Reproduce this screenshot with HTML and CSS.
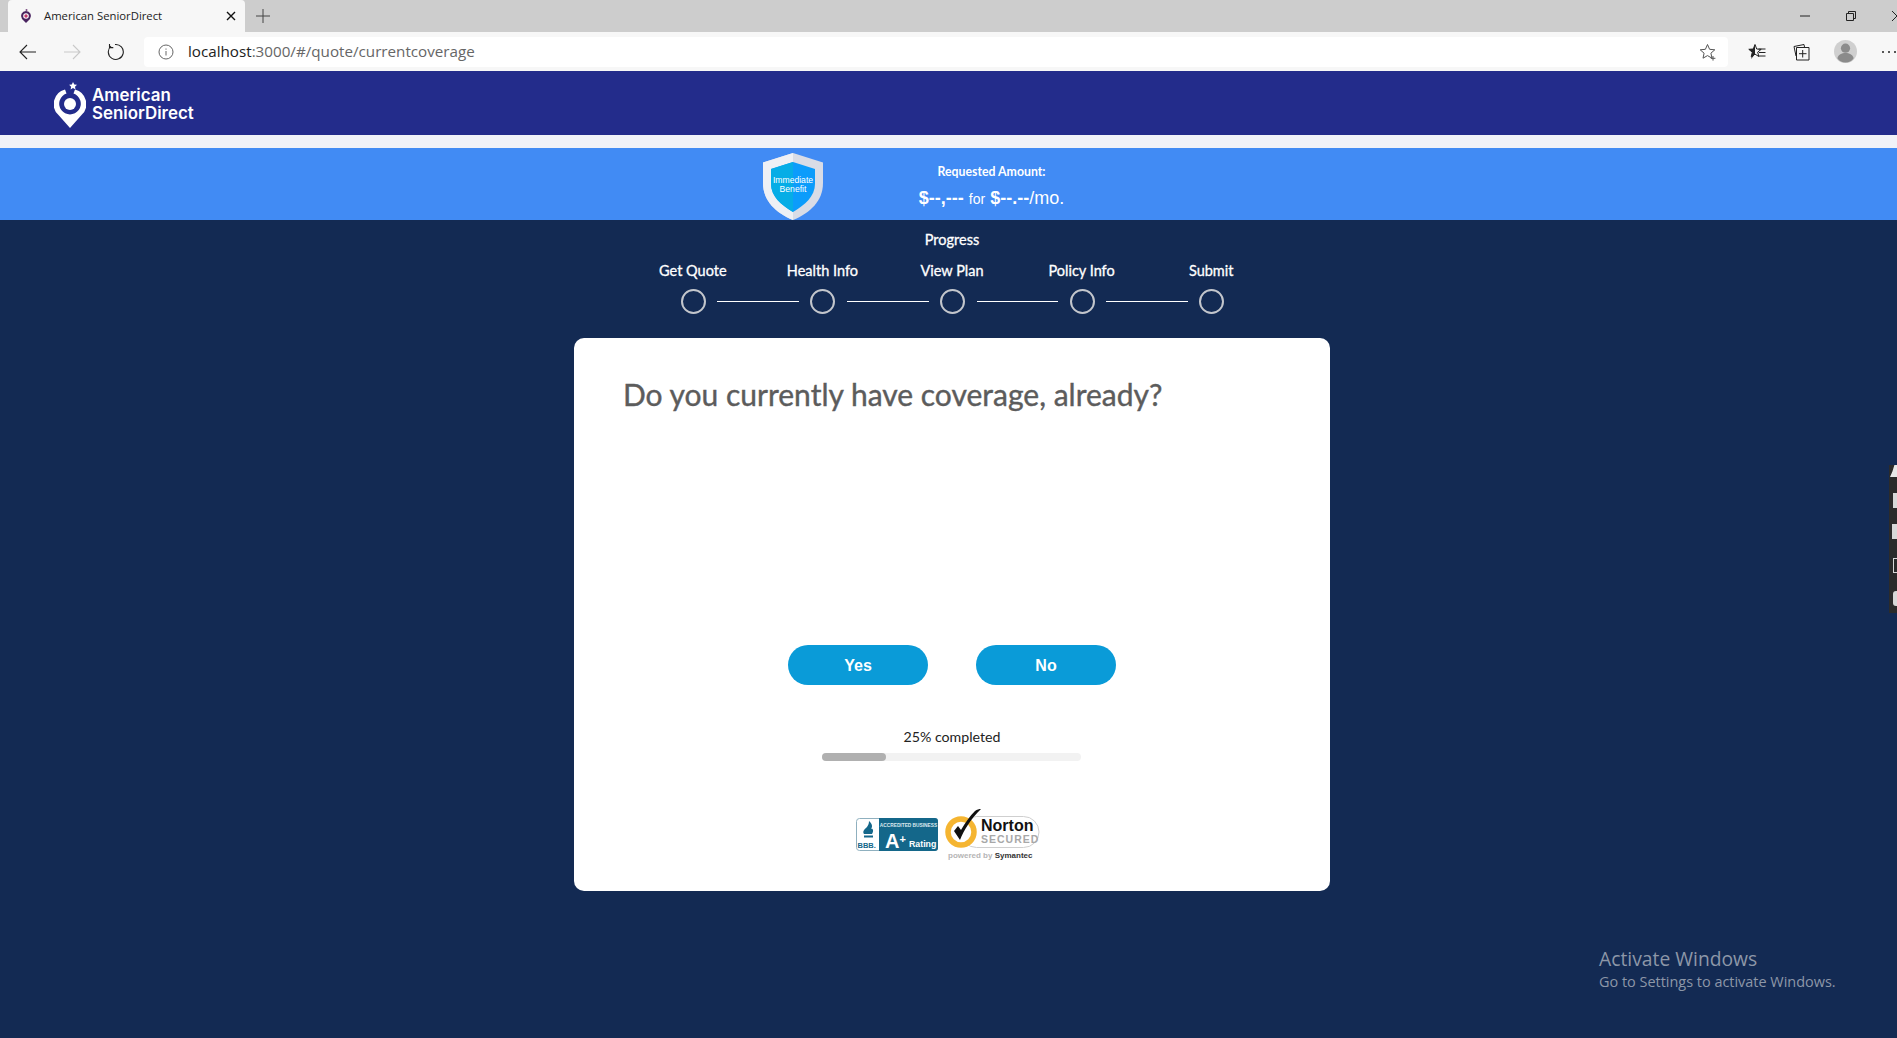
FILE: index.html
```html
<!DOCTYPE html>
<html lang="en">
<head>
  <meta charset="UTF-8">
  <title>American SeniorDirect</title>
  <link rel="stylesheet" href="styles.css">
</head>
<body>
  <div class="tabstrip">
    <div class="tab">
      <svg class="tab-icon" viewBox="0 0 12 14" width="12" height="14"><path d="M6 2a5 5 0 0 0-4 8l4 4 4-4A5 5 0 0 0 6 2z" fill="#4a2460"/><circle cx="6" cy="7" r="2.800" fill="#fff"/><circle cx="6" cy="7" r="1.700" fill="#c0396b"/><circle cx="6.500" cy="1" r="1" fill="#7a4a80"/></svg>
      <span class="tab-title">American SeniorDirect</span>
      <svg class="tab-close" viewBox="0 0 10 10" width="10" height="10"><path d="M1 1l8 8M9 1l-8 8" stroke="#111" stroke-width="1.400"/></svg>
    </div>
    <svg class="tab-new" viewBox="0 0 14 14" width="14" height="14"><path d="M7 0v14M0 7h14" stroke="#444" stroke-width="1"/></svg>
    <div class="win-controls">
      <svg viewBox="0 0 10 10" width="10" height="10"><path d="M0 5h10" stroke="#222"/></svg>
      <svg viewBox="0 0 10 10" width="10" height="10"><path d="M.5 2.500h7v7h-7zM2.500 2.500v-2h7v7h-2" fill="none" stroke="#222"/></svg>
      <svg viewBox="0 0 10 10" width="10" height="10"><path d="M0 0l10 10M10 0L0 10" stroke="#222"/></svg>
    </div>
  </div>

  <div class="toolbar">
    <div class="tool-btn"><svg viewBox="0 0 18 16" width="18" height="16"><path d="M17 8H1M8 1L1 8l7 7" fill="none" stroke="#222" stroke-width="1.100"/></svg></div>
    <div class="tool-btn"><svg viewBox="0 0 18 16" width="18" height="16"><path d="M1 8h16M10 1l7 7-7 7" fill="none" stroke="#c9c9c9" stroke-width="1.100"/></svg></div>
    <div class="tool-btn tool-reload"><svg viewBox="0 0 18 18" width="18" height="18"><path d="M5 3.200A7.500 7.500 0 1 0 9 1.500M3.500 1v3.600h3.800" fill="none" stroke="#222" stroke-width="1.100"/></svg></div>
    <div class="address">
      <svg class="info" viewBox="0 0 16 16" width="16" height="16"><circle cx="8" cy="8" r="7" fill="none" stroke="#666"/><path d="M8 7v4.500M8 4.500v1.200" stroke="#666"/></svg>
      <span class="url"><span class="url-host">localhost</span>:3000/#/quote/currentcoverage</span>
      <svg class="fav-add" viewBox="0 0 18 18" width="18" height="18"><path d="M8.500 1.500l2.100 4.800 5.200.5-3.900 3.400 1.100 5-4.500-2.600L4 15.200l1.100-5L1.200 6.800l5.200-.5z" fill="none" stroke="#555"/><path d="M14 13v4.600M11.800 15.300h4.600" stroke="#555"/></svg>
    </div>
    <div class="tool-btn"><svg viewBox="0 0 18 18" width="18" height="18"><path d="M7 1.500l1.700 4.500 4.500.3-3.500 2.800 1.100 4.400L7 11.100l-3.800 2.500 1.100-4.400L.8 6.300l4.500-.3z" fill="none" stroke="#222"/><path d="M7 1.500v9.600l-3.800 5 1.100-6.900L.8 6.300l4.500-.3z" fill="#222"/><path d="M10.500 6h7M11 9.500h6.500M10.500 13h7" stroke="#222"/></svg></div>
    <div class="tool-btn"><svg viewBox="0 0 18 18" width="18" height="18"><path d="M4 13L2 3.500 12 1.500l.6 3" fill="none" stroke="#222"/><path d="M4.500 4.500h12.500v12.500H4.500zM10.700 7v7.500M7 10.700h7.500" fill="none" stroke="#222"/></svg></div>
    <div class="tool-btn"><svg viewBox="0 0 24 24" width="23" height="23"><circle cx="12" cy="12" r="12" fill="#cfcfcf"/><circle cx="12" cy="8.500" r="4.800" fill="#8b8b8b"/><path d="M3.500 19c1-4 4.500-5.500 8.500-5.500s7.500 1.500 8.500 5.500c-2 3-5 4.500-8.500 4.500s-6.500-1.500-8.500-4.500z" fill="#8b8b8b"/></svg></div>
    <div class="tool-btn"><svg viewBox="0 0 16 4" width="16" height="4"><circle cx="2" cy="2" r="1" fill="#222"/><circle cx="8" cy="2" r="1" fill="#222"/><circle cx="14" cy="2" r="1" fill="#222"/></svg></div>
  </div>

  <header class="site-header">
    <svg class="logo-mark" viewBox="0 0 32 46" width="32" height="46">
      <path d="M19 0l1.300 2.500 2.700.3-2 1.900.5 2.700-2.500-1.300-2.400 1.300.5-2.700-2-1.900 2.700-.3z" fill="#fff"/>
      <path d="M11 7.500A15 15 0 0 0 4.500 33L16 46l11.500-13A15 15 0 0 0 21 7.500l-1.500 4a10.800 10.800 0 1 1-7 0z" fill="#fff"/>
      <circle cx="16" cy="22" r="6" fill="#fff"/>
    </svg>
    <div class="logo-text">American<br>SeniorDirect</div>
  </header>

  <div class="header-gap"></div>

  <div class="quote-bar">
    <svg class="shield" viewBox="0 0 60 67" width="60" height="67">
      <path d="M30 0L60 9.500V30c0 18-13 30-30 37C13 60 0 48 0 30V9.500z" fill="#d9dce6"/>
      <path d="M30 0v67C13 60 0 48 0 30V9.500z" fill="#eef0f5"/>
      <path d="M30 9l22 7v15c0 12-10 21-22 28C18 52 8 43 8 31V16z" fill="#0c9cfb"/>
      <path d="M30 9v50C18 52 8 43 8 31V16z" fill="#06ade6"/>
      <text class="shield-text" x="30" y="30">Immediate</text>
      <text class="shield-text" x="30" y="39">Benefit</text>
    </svg>
    <div class="quote-summary">
      <div class="quote-label">Requested Amount:</div>
      <div class="quote-amount"><b>$--,---</b> <small>for</small> <b>$--.--</b>/mo.</div>
    </div>
  </div>

  <main class="main">
    <div class="progress-title">Progress</div>
    <div class="step-labels">
      <span>Get Quote</span>
      <span>Health Info</span>
      <span>View Plan</span>
      <span>Policy Info</span>
      <span>Submit</span>
    </div>
    <div class="step-track">
      <i class="dot"></i><i class="line"></i>
      <i class="dot"></i><i class="line"></i>
      <i class="dot"></i><i class="line"></i>
      <i class="dot"></i><i class="line"></i>
      <i class="dot"></i>
    </div>

    <section class="card">
      <h1>Do you currently have coverage, already?</h1>
      <div class="answers">
        <button type="button">Yes</button>
        <button type="button">No</button>
      </div>
      <div class="completed">25% completed</div>
      <div class="bar"><div class="bar-fill" style="width: 25%"></div></div>
      <div class="badges">
        <svg viewBox="0 0 82 33" width="82" height="33">
          <rect x=".5" y=".5" width="81" height="32" rx="3" fill="#fff" stroke="#8fb0bf"/>
          <path d="M23 0h56a3 3 0 0 1 3 3v27a3 3 0 0 1-3 3H23z" fill="#14678a"/>
          <path d="M13 3c3 3 4 5 2 8 2-1 3 2 1 5H8c-2-3 1-5 3-7 1-2 2-3 2-6z" fill="#14678a"/>
          <rect x="8" y="17.500" width="9" height="2" fill="#14678a"/>
          <text class="bbb-mark" x="1.500" y="30">BBB.</text>
          <text class="bbb-top" x="52.500" y="9">ACCREDITED BUSINESS</text>
          <text class="bbb-grade" x="29" y="30">A<tspan class="bbb-plus" dy="-5">+</tspan></text>
          <text class="bbb-rating" x="53" y="29">Rating</text>
        </svg>
        <svg viewBox="0 0 96 52" width="96" height="52">
          <rect x="17" y="8.500" width="78" height="31" rx="15.500" fill="#fff" stroke="#cfcfcf"/>
          <circle cx="17" cy="24" r="13" fill="#fff" stroke="#f5b531" stroke-width="5.500"/>
          <path d="M10 23l6 9C20 22 26 12 37 1c-2 0-4 .5-6 2-5 5-10 12-14 19l-3-4z" fill="#111"/>
          <text class="norton-name" x="37" y="23">Norton</text>
          <text class="norton-secured" x="37" y="35">SECURED</text>
          <text class="norton-by" x="4" y="50">powered by <tspan class="norton-sym">Symantec</tspan></text>
        </svg>
      </div>
    </section>
  </main>

  <div class="activate">
    <div class="activate-title">Activate Windows</div>
    <div>Go to Settings to activate Windows.</div>
  </div>

  <div class="side-widget">
    <i class="side-star"></i>
    <i class="side-box"></i>
    <i class="side-box side-wide"></i>
    <i class="side-box side-outline"></i>
    <i class="side-box side-gear"></i>
  </div>
</body>
</html>
```

FILE: styles.css
```css
* { box-sizing: border-box; }
html, body { height: 100%; }
body { margin: 0; display: flex; flex-direction: column; overflow: hidden; font-family: Lato, "Liberation Sans", sans-serif; background: #132a53; }

.tabstrip { height: 32px; flex: none; display: flex; align-items: center; background: #cdcdcd; padding-left: 8px; }
.tab { width: 237px; height: 32px; display: flex; align-items: center; background: #f7f7f7; border-radius: 4px 4px 0 0; padding: 0 9px 0 12px; }
.tab-title { flex: 1; margin-left: 12px; padding-bottom: 1px; font: 11.300px "Open Sans", sans-serif; color: #222; }
.tab-new { margin-left: 11px; }
.win-controls { margin-left: auto; display: flex; gap: 36px; margin-right: -5px; flex: none; }
.win-controls svg { flex: none; }

.toolbar { height: 39px; flex: none; display: flex; align-items: center; background: #f7f7f7; padding-left: 6px; overflow: hidden; }
.tool-btn { width: 44px; flex: none; display: flex; justify-content: center; align-items: center; }
.tool-reload { padding-right: 2px; }
.address { width: 1584px; height: 30px; flex: none; margin: 0 7px 0 6px; background: #fff; border-radius: 4px; display: flex; align-items: center; padding: 0 11px 0 14px; }
.url { flex: 1; margin-left: 14px; padding-bottom: 2px; font: 15.200px "Open Sans", sans-serif; color: #666; }
.url-host { color: #222; }

.site-header { height: 64px; flex: none; display: flex; align-items: center; gap: 6px; background: #232c8b; padding-left: 54px; }
.logo-mark { margin-top: 4px; }
.logo-text { font: 600 16.900px/17.500px Inter, sans-serif; color: #fff; margin-top: 3px; }
.header-gap { height: 13px; flex: none; background: #f0f2f8; }

.quote-bar { height: 72px; flex: none; display: flex; background: #418bf4; padding-left: 763px; }
.shield { margin-top: 5px; }
.shield-text { font: 8.600px "Liberation Sans", sans-serif; fill: #fff; text-anchor: middle; }
.quote-summary { width: 200px; margin-left: 69px; text-align: center; color: #fff; padding-top: 14px; }
.quote-label { font-size: 12.300px; line-height: 20px; font-weight: 700; margin-left: -1px; }
.quote-amount { font: 18px/26px "Liberation Sans", sans-serif; margin-top: 3px; margin-left: -1px; }
.quote-amount small { font-size: 14px; }

.main { flex: 1; display: flex; flex-direction: column; align-items: center; padding: 10px 0 0 7px; background: #132a53; color: #fff; }
.progress-title { font-size: 14.500px; line-height: 20px; -webkit-text-stroke: .3px #fff; }
.step-labels { display: grid; grid-template-columns: repeat(5, 129.6px); margin-top: 10.500px; font-size: 14.500px; line-height: 20px; -webkit-text-stroke: .3px #fff; text-align: center; }
.step-track { display: flex; align-items: center; margin-top: 8.500px; height: 25px; margin-left: 1px; }
.dot { width: 25px; height: 25px; flex: none; border: 2px solid #c3c6cc; border-radius: 50%; }
.line { width: 81.600px; height: 1px; margin: 0 11.500px; background: #fff; }

.card { width: 756px; height: 553px; margin-top: 24px; display: flex; flex-direction: column; align-items: center; background: #fff; border-radius: 10px; color: #222; }
.card h1 { align-self: flex-start; margin: 35px 0 0 49px; font-size: 30px; line-height: 42px; font-weight: 400; color: #5c5c5c; -webkit-text-stroke: .4px #5c5c5c; }
.answers { display: flex; gap: 48px; margin-top: 230px; }
.answers button { width: 140px; height: 40px; padding-top: 2px; border: none; border-radius: 20px; background: #0a9bd8; color: #fff; font: 700 16px "Liberation Sans", sans-serif; cursor: pointer; }
.completed { margin-top: 42px; font-size: 14.200px; line-height: 20px; color: #222; }
.bar { width: 259px; height: 8px; margin: 6px 2px 0 0; border-radius: 4px; background: #f2f2f2; }
.bar-fill { height: 8px; border-radius: 4px; background: #b0b0b0; }
.badges { display: flex; align-items: flex-start; gap: 6px; margin-top: 47px; margin-right: 8px; }
.badges svg:first-child { margin-top: 10px; }

.bbb-mark { font: 700 7.500px "Liberation Sans", sans-serif; fill: #14678a; }
.bbb-top { font: 700 4.800px "Liberation Sans", sans-serif; fill: #dce9ee; text-anchor: middle; }
.bbb-grade { font: 700 20px "Liberation Sans", sans-serif; fill: #fff; }
.bbb-plus { font-size: 11px; }
.bbb-rating { font: 700 8.800px "Liberation Sans", sans-serif; fill: #fff; }
.norton-name { font: 700 16px "Liberation Sans", sans-serif; fill: #111; }
.norton-secured { font: 700 10.500px "Liberation Sans", sans-serif; fill: #a8a8a8; letter-spacing: 1px; }
.norton-by { font: 700 8px "Liberation Sans", sans-serif; fill: #b5b5b5; }
.norton-sym { fill: #333; }

.activate { position: absolute; left: 1599px; top: 946px; font: 14.450px/20px "Open Sans", sans-serif; color: #8d97a8; }
.activate-title { font-size: 19.300px; line-height: 26px; }

.side-widget { position: absolute; left: 1889px; top: 465px; width: 8px; height: 148px; background: #2b2b2b; display: flex; flex-direction: column; padding: 0 0 0 4px; }
.side-star { width: 8px; height: 12px; margin-left: -3px; background: #e8e8e8; clip-path: polygon(0 100%, 30% 55%, 55% 0, 100% 0, 100% 100%); }
.side-box { width: 5px; height: 15px; margin-top: 16px; background: #d8d8d8; }
.side-wide { margin-left: -1px; width: 6px; }
.side-outline { background: none; border: 1.500px solid #d8d8d8; border-right: none; margin-top: 19px; }
.side-gear { margin-top: 18px; border-radius: 3px 0 0 3px; }
```
